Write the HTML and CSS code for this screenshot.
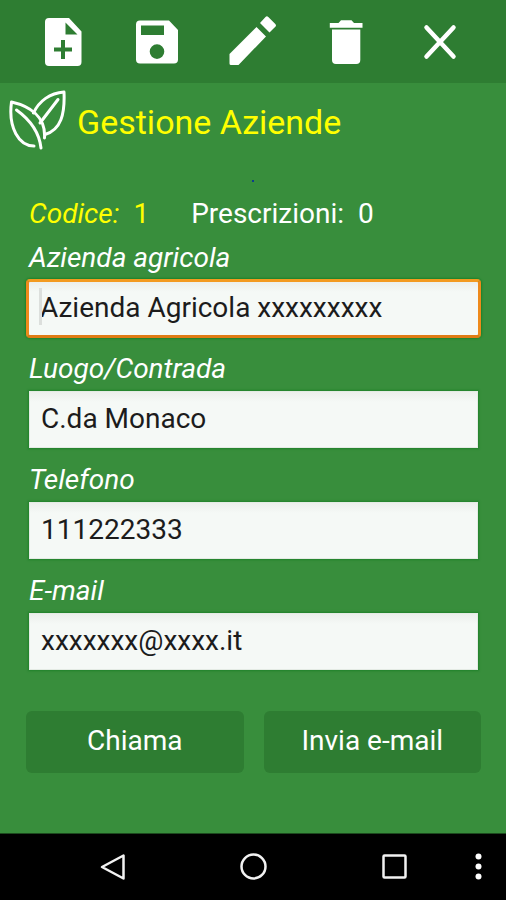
FILE: index.html
```html
<!DOCTYPE html>
<html lang="it">
<head>
<meta charset="utf-8">
<meta name="viewport" content="width=device-width, initial-scale=1">
<title>Gestione Aziende</title>
<link rel="stylesheet" href="styles.css">
</head>
<body>
<header class="toolbar">
  <button type="button" class="tool" aria-label="Nuovo">
    <svg class="tool-icon" viewBox="0 0 64 64"><path fill-rule="evenodd" d="M18 8H38L50.500 21.500V52a4 4 0 0 1-4 4H18a4 4 0 0 1-4-4V12a4 4 0 0 1 4-4ZM34.500 12.500V24.500H46.500ZM30 30V37.500H23V41.500H30V49H34V41.500H41V37.500H34V30Z"/></svg>
  </button>
  <button type="button" class="tool" aria-label="Salva">
    <svg class="tool-icon" viewBox="0 0 64 64"><path fill-rule="evenodd" d="M15 10.500H44L53 20V49.500a4 4 0 0 1-4 4H15a4 4 0 0 1-4-4V14.500a4 4 0 0 1 4-4ZM16 15.500V25H39V15.500ZM32 34.300a7.300 7.300 0 1 0 0 14.600a7.300 7.300 0 1 0 0-14.600Z"/></svg>
  </button>
  <button type="button" class="tool" aria-label="Modifica">
    <svg class="tool-icon" viewBox="0 0 64 64"><path d="M10.500 44 37.500 17 47 26.500 19.500 55H12a1.500 1.500 0 0 1-1.500-1.500ZM41 13 46.500 7a2 2 0 0 1 2.800 0L56.300 14a2 2 0 0 1 0 2.800L50.500 22.500Z"/></svg>
  </button>
  <button type="button" class="tool" aria-label="Elimina">
    <svg class="tool-icon" viewBox="0 0 64 64"><path d="M15.800 13H24.500L27 10.300H37.500L40 13H48.500V17.800H15.800ZM18 19.500H46.300V50a4 4 0 0 1-4 4H22a4 4 0 0 1-4-4Z"/></svg>
  </button>
  <button type="button" class="tool" aria-label="Chiudi">
    <svg class="tool-icon" viewBox="0 0 64 64"><path class="cross" d="M18.500 17.500 45.500 46.500M45.500 17.500 18.500 46.500"/></svg>
  </button>
</header>

<main class="content">
  <div class="heading">
    <svg class="leaf" viewBox="0 0 58 60" aria-hidden="true">
      <path d="M26 56C11 56 0 38 3.500 12C21 16 38 26 36.500 48"/>
      <path d="M8.500 20C21 29 31 40 33 58"/>
      <path d="M25.500 23C31 11 42 3 56 2C57 24 53 40 37 44.500"/>
      <path d="M50 9.500 32 33"/>
    </svg>
    <h1 class="title">Gestione Aziende</h1>
  </div>
  <div class="marker"></div>

  <form class="form">
    <div class="summary">
      <span class="code"><em>Codice:</em><span>1</span></span>
      <span class="count"><span>Prescrizioni:</span><span>0</span></span>
    </div>

    <label class="label" for="azienda">Azienda agricola</label>
    <div class="field active"><input class="input" id="azienda" type="text" value="Azienda Agricola xxxxxxxxx"></div>

    <label class="label" for="luogo">Luogo/Contrada</label>
    <div class="field"><input class="input" id="luogo" type="text" value="C.da Monaco"></div>

    <label class="label" for="telefono">Telefono</label>
    <div class="field"><input class="input" id="telefono" type="tel" value="111222333"></div>

    <label class="label" for="email">E-mail</label>
    <div class="field"><input class="input" id="email" type="email" value="xxxxxxx@xxxx.it"></div>

    <div class="actions">
      <button type="button" class="action">Chiama</button>
      <button type="button" class="action">Invia e-mail</button>
    </div>
  </form>
</main>

<nav class="navbar">
  <button type="button" class="nav-button" aria-label="Indietro"><svg class="nav-icon" viewBox="0 0 28 28"><path d="M24.500 2.500V25.500L3 14Z"/></svg></button>
  <button type="button" class="nav-button" aria-label="Home"><svg class="nav-icon" viewBox="0 0 28 28"><circle cx="14.500" cy="13.500" r="12"/></svg></button>
  <button type="button" class="nav-button" aria-label="Recenti"><svg class="nav-icon" viewBox="0 0 28 28"><rect x="3.500" y="2.500" width="22" height="22" rx="1"/></svg></button>
  <button type="button" class="nav-button" aria-label="Menu"><svg class="nav-icon dots" viewBox="0 0 28 28"><circle cx="14.500" cy="3.500" r="3"/><circle cx="14.500" cy="13.500" r="3"/><circle cx="14.500" cy="23.500" r="3"/></svg></button>
</nav>
</body>
</html>
```
FILE: styles.css
```css
* {
  box-sizing: border-box;
}

body {
  margin: 0;
  min-height: 100vh;
  display: flex;
  flex-direction: column;
  background: #388e3c;
  color: #fff;
  font-family: Roboto, sans-serif;
  font-size: 28px;
  line-height: 44px;
}

button {
  margin: 0;
  padding: 0;
  border: 0;
  background: none;
  color: inherit;
  font: inherit;
}

.toolbar {
  display: grid;
  grid-template-columns: repeat(5, 1fr);
  padding: 10px 19px 9px 16px;
  background: #2e7d32;
}

.tool {
  display: flex;
  justify-content: center;
}

.tool-icon {
  width: 64px;
  height: 64px;
  fill: #fff;
}

.cross {
  fill: none;
  stroke: #fff;
  stroke-width: 4.5;
  stroke-linecap: round;
}

.content {
  flex: 1;
}

.heading {
  display: flex;
  align-items: center;
  gap: 11px;
  padding: 7px 8px 0;
}

.leaf {
  width: 58px;
  height: 60px;
  fill: none;
  stroke: #fff;
  stroke-width: 3;
  stroke-linecap: round;
  stroke-linejoin: round;
}

.title {
  margin: 0;
  padding-top: 4px;
  color: #ffff00;
  font-size: 34px;
  font-weight: 400;
}

.marker {
  width: 2px;
  height: 2px;
  margin: 30px auto 0;
  background: #0d3c8c;
}

.form {
  padding: 10px 28px 0 29px;
}

.summary {
  display: flex;
  gap: 42px;
}

.code,
.count {
  display: flex;
  gap: 14px;
}

.code {
  color: #ffff00;
}

.label {
  display: block;
  height: 54px;
  padding-top: 10px;
  font-style: italic;
}

.summary + .label {
  height: 44px;
  padding-top: 0;
}

.field {
  position: relative;
}

.input {
  display: block;
  width: 100%;
  height: 57px;
  padding: 0 11px 2px;
  border: 1px solid #e4ebe4;
  border-radius: 0;
  outline: 0;
  background: linear-gradient(#ecefec, #f5f9f6 10px);
  box-shadow: 0 0 2px 1px #1f8229;
  color: #1c1c1c;
  font: inherit;
}

.active {
  margin: -1px -3px;
}

.active .input {
  height: 59px;
  border: 3px solid #ee8a1c;
  border-color: #f39a20 #ee8a1c #e07c14;
  border-radius: 4px;
}

.active::before {
  content: "";
  position: absolute;
  left: 13px;
  top: 9px;
  width: 3px;
  height: 37px;
  background: #dcdfdc;
}

.actions {
  display: grid;
  grid-template-columns: 1fr 1fr;
  gap: 20px;
  margin: 41px -3px 0;
}

.action {
  height: 62px;
  padding-bottom: 2px;
  border-radius: 6px;
  background: #2e7d32;
}

.navbar {
  display: grid;
  grid-template-columns: 1fr 1fr 1fr 29px;
  height: 67px;
  padding: 0 13px 0 43px;
  border-top: 1px solid #1c4a1e;
  background: #000;
}

.nav-button {
  display: flex;
  align-items: center;
  justify-content: center;
}

.nav-icon {
  width: 28px;
  height: 28px;
  fill: none;
  stroke: #f2f2f2;
  stroke-width: 2.5;
  stroke-linejoin: round;
}

.dots {
  fill: #fff;
  stroke: none;
}
```
